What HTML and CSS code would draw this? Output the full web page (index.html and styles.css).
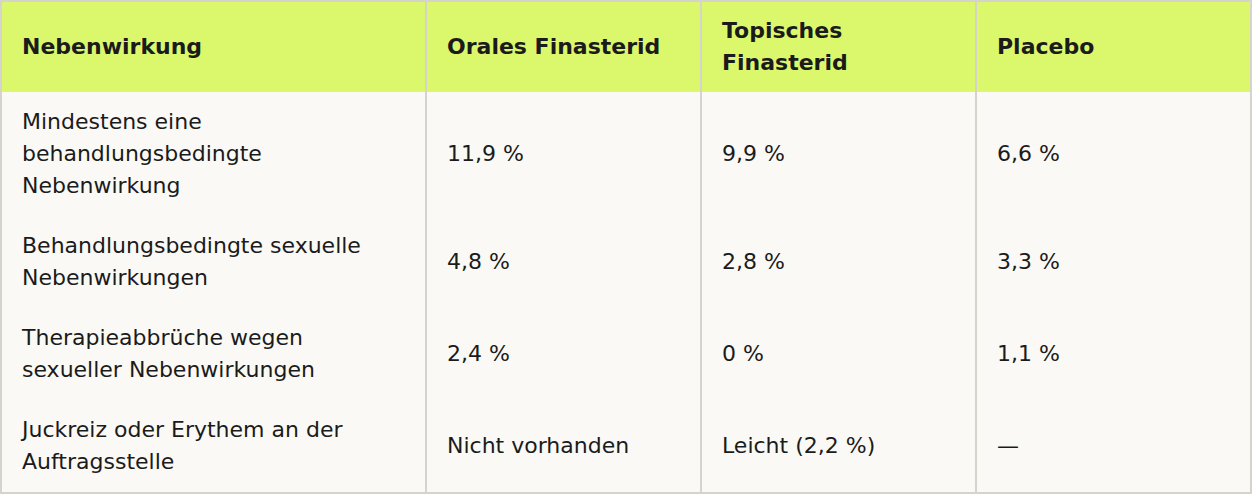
FILE: index.html
```html
<!DOCTYPE html>
<html lang="de">
<head>
<meta charset="utf-8">
<title>Nebenwirkungen</title>
<link rel="stylesheet" href="styles.css">
</head>
<body>
<table class="cmp">
  <colgroup>
    <col class="c-first">
    <col class="c-val">
    <col class="c-val">
    <col class="c-val">
  </colgroup>
  <thead>
    <tr>
      <th>Nebenwirkung</th>
      <th>Orales Finasterid</th>
      <th>Topisches Finasterid</th>
      <th>Placebo</th>
    </tr>
  </thead>
  <tbody>
    <tr>
      <td>Mindestens eine behandlungsbedingte Nebenwirkung</td>
      <td>11,9 %</td>
      <td>9,9 %</td>
      <td>6,6 %</td>
    </tr>
    <tr>
      <td>Behandlungsbedingte sexuelle Nebenwirkungen</td>
      <td>4,8 %</td>
      <td>2,8 %</td>
      <td>3,3 %</td>
    </tr>
    <tr>
      <td>Therapieabbrüche wegen sexueller Nebenwirkungen</td>
      <td>2,4 %</td>
      <td>0 %</td>
      <td>1,1 %</td>
    </tr>
    <tr>
      <td>Juckreiz oder Erythem an der Auftragsstelle</td>
      <td>Nicht vorhanden</td>
      <td>Leicht (2,2 %)</td>
      <td>—</td>
    </tr>
  </tbody>
</table>
</body>
</html>
```

FILE: styles.css
```css
html, body {
  margin: 0;
  padding: 0;
  background: #faf9f5;
}

body {
  font-family: "DejaVu Sans", Verdana, sans-serif;
  font-size: 22px;
  line-height: 32px;
  color: #1b1b1b;
}

.cmp {
  width: 1252px;
  border-collapse: collapse;
  table-layout: fixed;
  border: 2px solid #d5d3cb;
}

.c-first { width: 425px; }
.c-val { width: 275px; }

.cmp th,
.cmp td {
  text-align: left;
  vertical-align: middle;
  border-left: 2px solid #d5d3cb;
  border-right: 2px solid #d5d3cb;
}

.cmp th {
  background: #dbf86c;
  font-weight: bold;
  padding: 13px 20px;
}

.cmp td {
  background: #faf9f5;
  font-weight: normal;
  padding: 14px 20px;
}
```
